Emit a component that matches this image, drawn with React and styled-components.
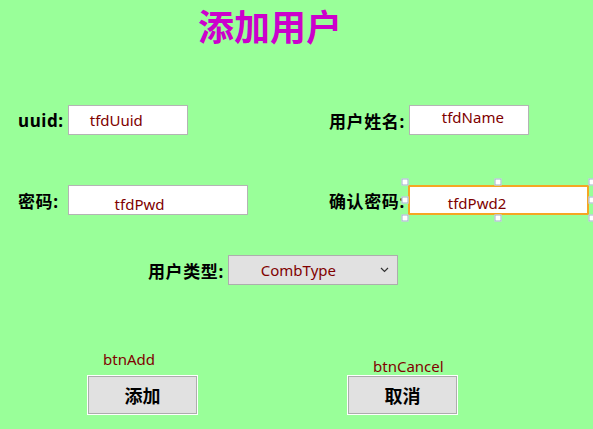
import React from 'react';
import styled, { createGlobalStyle } from 'styled-components';

const GlobalStyle = createGlobalStyle`
  html, body {
    margin: 0;
    padding: 0;
    background-color: #99ff99;
  }
  body {
    font-family: 'Noto Sans', 'Noto Sans CJK SC', sans-serif;
  }
`;

const Canvas = styled.div`
  width: 593px;
  height: 429px;
  background-color: #99ff99;
  overflow: hidden;
  display: flex;
  flex-direction: column;
`;

const Title = styled.h1`
  margin: 0;
  padding: 3px 0 0 198px;
  height: 45px;
  font-family: 'Noto Sans CJK SC', sans-serif;
  font-size: 36px;
  line-height: 44px;
  font-weight: 700;
  color: #cc00cc;
`;

const FieldGrid = styled.div`
  display: grid;
  grid-template-columns: 311px auto;
  padding-left: 18px;
  margin-top: ${(p) => p.$top}px;
  height: 30px;
`;

const CenterRow = styled.div`
  display: flex;
  padding-left: ${(p) => p.$left}px;
  margin-top: ${(p) => p.$top}px;
  height: 30px;
`;

const Field = styled.div`
  display: flex;
  align-items: center;
  gap: ${(p) => p.$gap || 4}px;
`;

const Label = styled.span`
  font-family: 'Noto Sans', 'Noto Sans CJK SC', sans-serif;
  font-size: 17px;
  font-weight: 700;
  letter-spacing: 0.6px;
  color: #000;
  white-space: nowrap;
`;

const TextBox = styled.div`
  box-sizing: border-box;
  width: ${(p) => p.$width}px;
  height: 30px;
  background: #fff;
  border: ${(p) => (p.$selected ? '2px solid #f5a623' : '1px solid #b4b4b4')};
  padding: ${(p) => p.$top}px 0 0 ${(p) => p.$x}px;
  font-size: 15px;
  line-height: 20px;
  color: #800000;
  white-space: nowrap;
`;

const Selection = styled.div`
  position: relative;
`;

const HandleFrame = styled.div`
  position: absolute;
  inset: -3px;
  pointer-events: none;
`;

const Handle = styled.span`
  position: absolute;
  width: 5px;
  height: 5px;
  background: #fff;
  border: 1px solid #9fb2cb;
  left: ${(p) => p.$x};
  top: ${(p) => p.$y};
  transform: translate(-50%, -50%);
`;

const Combo = styled.div`
  box-sizing: border-box;
  width: 170px;
  height: 30px;
  display: flex;
  align-items: center;
  justify-content: space-between;
  background: #e1e1e1;
  border: 1px solid #adadad;
  padding: 0 8px 0 32px;
  font-size: 15px;
  color: #800000;
`;

const ButtonRow = styled.div`
  display: flex;
  gap: 151px;
  padding-left: 88px;
  margin-top: 64px;
  height: 65px;
`;

const ButtonGroup = styled.div`
  display: flex;
  flex-direction: column;
  justify-content: flex-end;
`;

const Caption = styled.span`
  margin-left: ${(p) => p.$x}px;
  margin-bottom: ${(p) => p.$gap}px;
  font-size: 15px;
  line-height: 20px;
  color: #800000;
`;

const Button = styled.button`
  box-sizing: border-box;
  width: 109px;
  height: 38px;
  background: #e1e1e1;
  border: 1px solid #adadad;
  outline: 1px solid #fff;
  font-family: 'Noto Sans CJK SC', sans-serif;
  font-size: 18px;
  font-weight: 700;
  color: #000;
  padding: 0;
`;

const Chevron = () => (
  <svg width="9" height="6" viewBox="0 0 9 6">
    <path d="M1 1 L4.5 4.5 L8 1" fill="none" stroke="#333" strokeWidth="1.2" />
  </svg>
);

const handles = [
  ['0%', '0%'], ['50%', '0%'], ['100%', '0%'],
  ['0%', '50%'], ['100%', '50%'],
  ['0%', '100%'], ['50%', '100%'], ['100%', '100%'],
];

function App() {
  return (
    <>
      <GlobalStyle />
      <Canvas>
        <Title>添加用户</Title>

        <FieldGrid $top={57}>
          <Field>
            <Label>uuid:</Label>
            <TextBox $width={120} $x={21} $top={4}>tfdUuid</TextBox>
          </Field>
          <Field>
            <Label>用户姓名:</Label>
            <TextBox $width={120} $x={32} $top={1}>tfdName</TextBox>
          </Field>
        </FieldGrid>

        <FieldGrid $top={50}>
          <Field $gap={9}>
            <Label>密码:</Label>
            <TextBox $width={180} $x={46} $top={8}>tfdPwd</TextBox>
          </Field>
          <Field $gap={3}>
            <Label>确认密码:</Label>
            <Selection>
              <TextBox $width={181} $x={38} $top={6} $selected>tfdPwd2</TextBox>
              <HandleFrame>
                {handles.map(([x, y]) => (
                  <Handle key={x + y} $x={x} $y={y} />
                ))}
              </HandleFrame>
            </Selection>
          </Field>
        </FieldGrid>

        <CenterRow $left={148} $top={40}>
          <Field>
            <Label>用户类型:</Label>
            <Combo>
              <span>CombType</span>
              <Chevron />
            </Combo>
          </Field>
        </CenterRow>

        <ButtonRow>
          <ButtonGroup>
            <Caption $x={15} $gap={7}>btnAdd</Caption>
            <Button>添加</Button>
          </ButtonGroup>
          <ButtonGroup>
            <Caption $x={25} $gap={0}>btnCancel</Caption>
            <Button>取消</Button>
          </ButtonGroup>
        </ButtonRow>
      </Canvas>
    </>
  );
}

export default App;
